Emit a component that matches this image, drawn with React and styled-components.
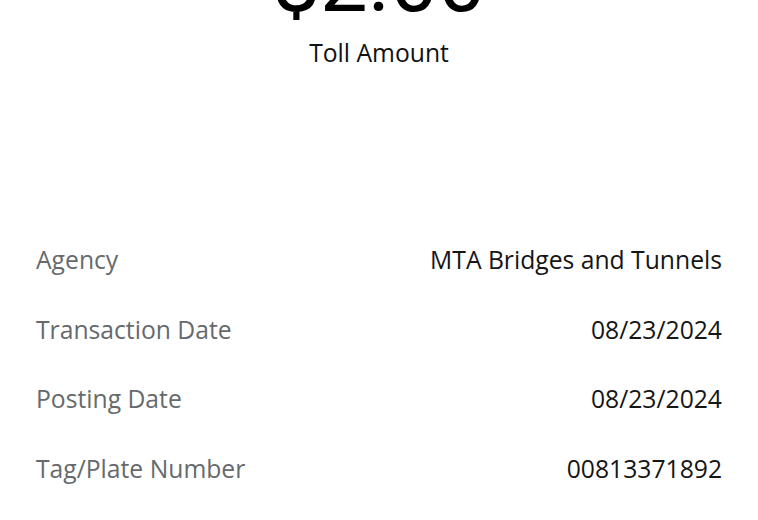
import React from "react"
import styled, { createGlobalStyle } from "styled-components"

const GlobalStyle = createGlobalStyle`
  html, body {
    margin: 0;
    padding: 0;
    background: #ffffff;
    overflow: hidden;
  }
  body {
    font-family: "Open Sans", "Noto Sans", sans-serif;
  }
`

const Page = styled.div`
  width: 758px;
  height: 520px;
  overflow: hidden;
  background: #fff;
`

const Summary = styled.div`
  display: flex;
  flex-direction: column;
  align-items: center;
`

const Amount = styled.div`
  font-family: Roboto, "Noto Sans", sans-serif;
  font-size: 85px;
  line-height: 80px;
  color: #000;
  margin-top: -58px;
`

const Caption = styled.div`
  font-size: 24.7px;
  line-height: 32px;
  color: #111;
  margin-top: 15px;
`

const Details = styled.div`
  display: flex;
  flex-direction: column;
  padding: 0 36px;
  margin-top: 156px;
`

const Row = styled.div`
  display: flex;
  justify-content: space-between;
  align-items: center;
  height: 69.7px;
  font-size: 24.7px;
  line-height: 32px;
`

const Label = styled.span`
  color: #666a6d;
`

const Value = styled.span`
  color: #151515;
`

const rows = [
  ["Agency", "MTA Bridges and Tunnels"],
  ["Transaction Date", "08/23/2024"],
  ["Posting Date", "08/23/2024"],
  ["Tag/Plate Number", "00813371892"],
]

export default function App() {
  return (
    <Page>
      <GlobalStyle />
      <Summary>
        <Amount>$2.00</Amount>
        <Caption>Toll Amount</Caption>
      </Summary>
      <Details>
        {rows.map(([label, value]) => (
          <Row key={label}>
            <Label>{label}</Label>
            <Value>{value}</Value>
          </Row>
        ))}
      </Details>
    </Page>
  )
}
